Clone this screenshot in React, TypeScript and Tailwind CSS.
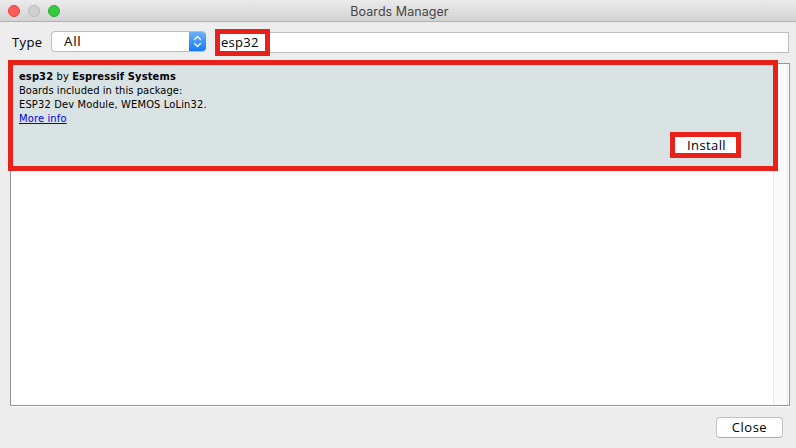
import React from "react";

const uiFont = "font-['Open_Sans','Liberation_Sans',sans-serif]";

function TitleBar() {
  return (
    <header className="relative flex h-[22px] shrink-0 items-center justify-center border-b border-[#b1b1b1] bg-linear-to-b from-[#ebebeb] to-[#d3d3d3]">
      <div className="absolute left-2 top-[5px] flex gap-2">
        <span className="size-3 rounded-full border border-[#e2443f] bg-[#fc5b57]" />
        <span className="size-3 rounded-full border border-[#b8b8b8] bg-[#d0d0d0]" />
        <span className="size-3 rounded-full border border-[#2dad35] bg-[#35cb3e]" />
      </div>
      <h1 className="pl-[3px] pt-[3px] font-['Inter','Roboto',sans-serif] text-[12.5px] leading-5 tracking-[0.06px] text-[#454545]">
        Boards Manager
      </h1>
    </header>
  );
}

function TypeSelect() {
  return (
    <button className="flex h-[21px] w-[155px] items-stretch overflow-hidden rounded-[4px] border border-[#bdbdbd] border-r-0 bg-white text-left">
      <span className="flex-1 pl-3 text-[13.5px] leading-[19px] tracking-[0.6px]">All</span>
      <span className="-my-px flex w-[17px] items-center justify-center bg-linear-to-b from-[#6cb3fa] to-[#0a76fb]">
        <svg width="9" height="13" viewBox="0 0 9 13" fill="none" stroke="white" strokeWidth="1.3" strokeLinecap="round" strokeLinejoin="round">
          <path d="M1.5 4.5 4.5 1.5l3 3M1.5 8.5l3 3 3-3" />
        </svg>
      </span>
    </button>
  );
}

function BoardEntry() {
  return (
    <article className="absolute -left-[3px] -top-[4px] h-[111px] w-[770px] border-[5px] border-[#e8211b] bg-[#dae3e4]">
      <div className="pl-1.5 pt-[5px] font-['DejaVu_Sans_Condensed','DejaVu_Sans',sans-serif] text-[11px] leading-[14px] tracking-[0.16px] text-black">
        <p className="tracking-[0.14px]"><b>esp32</b> by <b>Espressif Systems</b></p>
        <p className="tracking-[0.07px]">Boards included in this package:</p>
        <p>ESP32 Dev Module, WEMOS LoLin32.</p>
        <a className="text-[#0000ee] underline">More info</a>
      </div>
      <button className="absolute left-[657px] top-[67px] h-[26px] w-[71px] border-[5px] border-[#e8211b] bg-white pl-0.5 text-[13px] leading-4 tracking-[0.4px]">
        Install
      </button>
    </article>
  );
}

export default function App() {
  return (
    <main className={`flex h-[448px] w-[796px] flex-col overflow-hidden bg-[#ededed] text-black ${uiFont}`}>
      <TitleBar />
      <div className="flex h-[41px] shrink-0 pl-3 pr-[7px] pt-[9px]">
        <label className="w-[39px] text-[13px] leading-[22px] tracking-[0.4px]">Type</label>
        <TypeSelect />
        <div className="relative ml-[9px] mt-px h-[21px] flex-1 border border-[#bdbdbd] bg-white">
          <div className="absolute -left-px -top-[4px] h-[27px] w-[55px] border-[5px] border-[#e8211b] bg-white pl-px text-[13px] leading-4 tracking-[0.3px]">
            esp32
          </div>
        </div>
      </div>
      <section className="relative ml-[10px] h-[343px] w-[780px] shrink-0 border border-[#949694] bg-white shadow-[0_1px_0_white]">
        <div className="ml-auto mr-px h-full w-[15px] border-x border-[#e8e8e8] bg-[#fafafa]" />
        <BoardEntry />
      </section>
      <footer className="flex justify-end pr-[13px] pt-[11px]">
        <button className="h-[21px] w-[67px] rounded-[4px] border border-[#c2c2c2] border-b-[#acacac] bg-white text-[13px] leading-[19px] tracking-[0.5px]">
          Close
        </button>
      </footer>
    </main>
  );
}
